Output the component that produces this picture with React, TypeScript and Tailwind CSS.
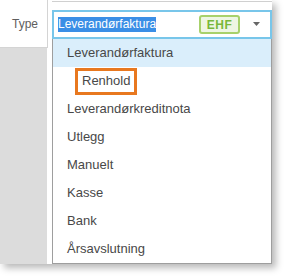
import React from "react";

const items = [
  { label: "Leverandørfaktura", active: true },
  { label: "Renhold", sub: true },
  { label: "Leverandørkreditnota" },
  { label: "Utlegg" },
  { label: "Manuelt" },
  { label: "Kasse" },
  { label: "Bank" },
  { label: "Årsavslutning" },
];

export default function App() {
  return (
    <div className="w-[285px] h-[278px] bg-white font-['Liberation_Sans',Arial,sans-serif]">
      <div className="relative w-[272px] h-[264px] bg-white shadow-[4px_4px_7px_rgba(0,0,0,0.28)]">
        <div className="flex h-[48px]">
          <div className="w-[48px] h-[48px] border-b border-r border-[#d4d4d4] flex items-center pl-[12px] text-[12px] text-[#5e5e5e]">
            Type
          </div>
          <div className="flex-1 pl-[4px]">
            <div className="h-[1px] mt-[1px] bg-[#d0d0d0]" />
            <div className="mt-[8px] h-[29px] border-2 border-[#78c6ea] flex items-center pl-[4px] pr-[10px]">
              <span className="bg-[#3a8ee6] text-white text-[12px] leading-[15px]">Leverandørfaktura</span>
              <div className="ml-auto mr-[13px] h-[19px] w-[41px] rounded-[3px] border-2 border-[#a7d16b] bg-[#eef6e3] flex items-center justify-center text-[12px] font-bold tracking-[0.5px] text-[#78b83a]">
                EHF
              </div>
              <svg width="7" height="4" viewBox="0 0 7 4" className="mb-[1px]">
                <path d="M0 0 L7 0 L3.5 4 Z" fill="#666" />
              </svg>
            </div>
          </div>
        </div>
        <div className="flex h-[216px]">
          <div className="w-[47px] h-full bg-[#dcdcdc]" />
        </div>
        <div className="absolute left-[52px] top-[39px] w-[220px] border-x border-b border-[#9e9e9e] bg-white">
          {items.map((it) =>
            it.sub ? (
              <div key={it.label} className="h-[28px] flex items-center pl-[22px]">
                <div className="h-[27px] border-[3px] border-[#e8781f] px-[4px] flex items-center text-[13px] text-[#484848]">
                  {it.label}
                </div>
              </div>
            ) : (
              <div
                key={it.label}
                className={`h-[28px] flex items-center pl-[14px] text-[13px] text-[#484848] ${it.active ? "bg-[#daeefb]" : ""}`}
              >
                {it.label}
              </div>
            )
          )}
        </div>
      </div>
    </div>
  );
}
